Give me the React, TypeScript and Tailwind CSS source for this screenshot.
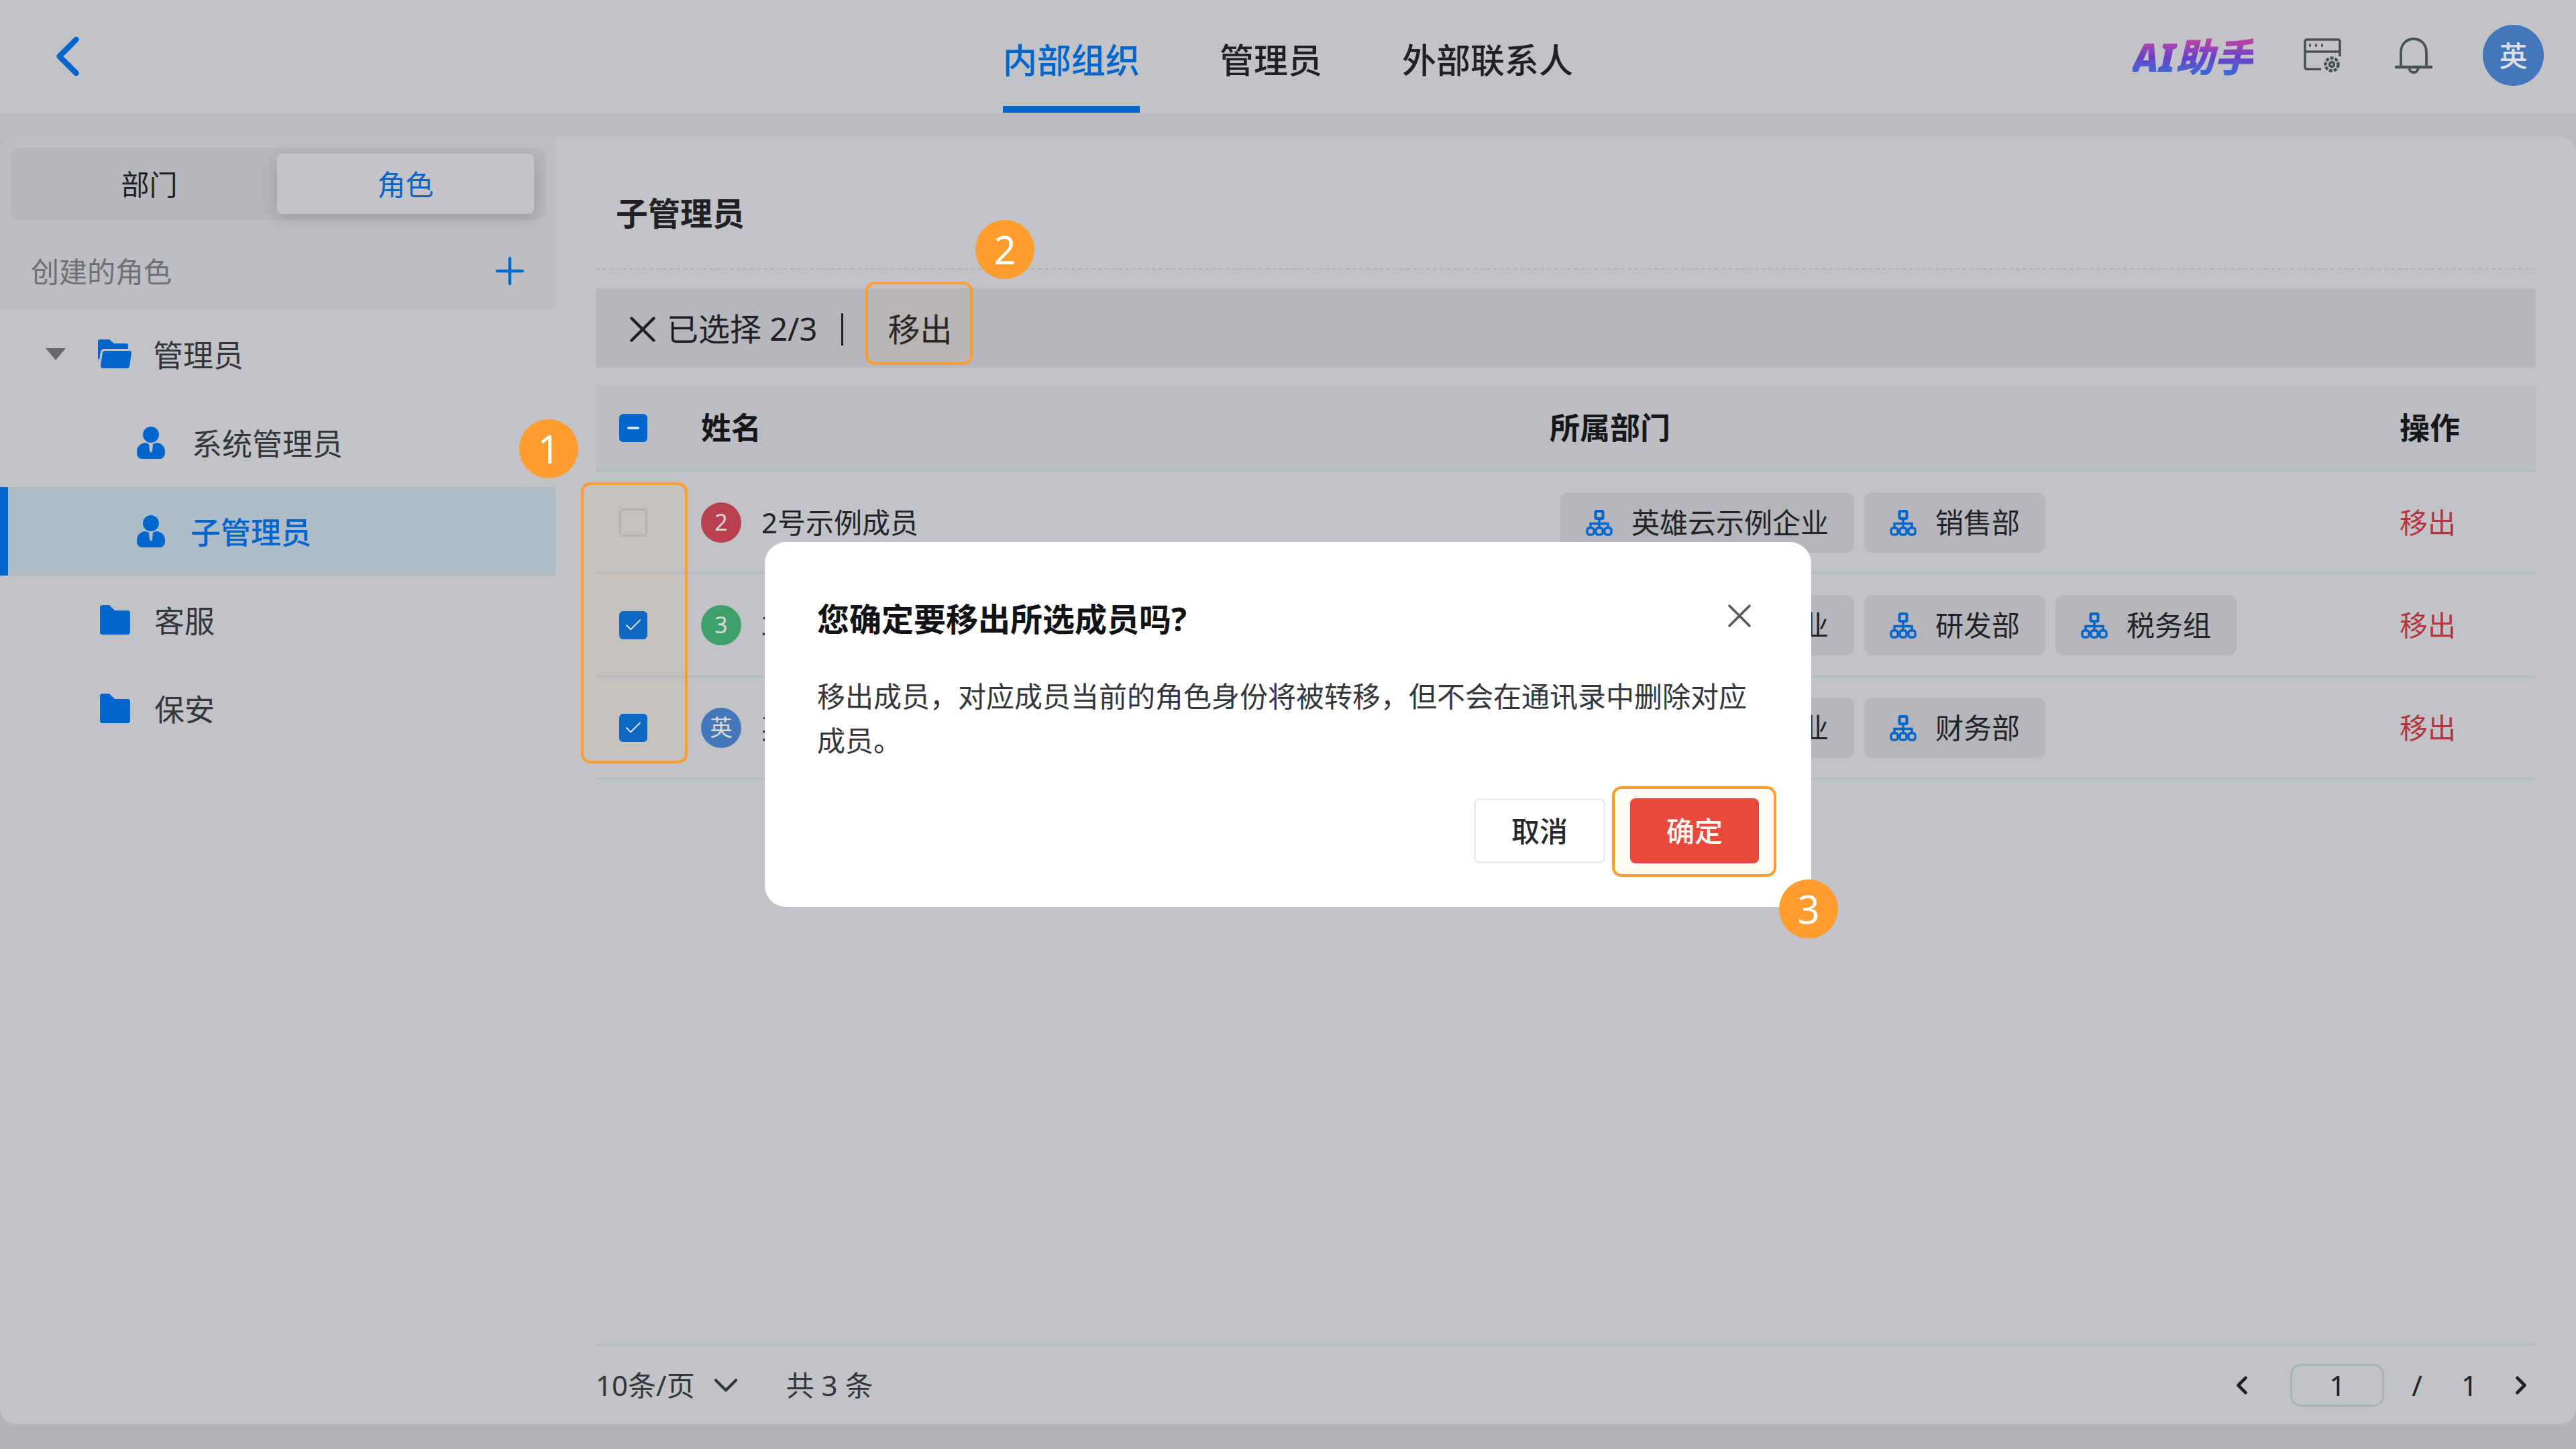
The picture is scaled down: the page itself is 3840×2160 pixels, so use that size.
import React from "react";
import { ChevronLeft, ChevronRight, ChevronDown, Plus, X, Check } from "lucide-react";

const F = { fontFamily: '"Noto Sans","Noto Sans CJK SC",sans-serif' };
const BODY = "移出成员\uFF0C对应成员当前的角色身份将被转移\uFF0C但不会在通讯录中删除对应成员\u3002";

function OrgIcon() {
  return (
    <svg width="40" height="40" viewBox="0 0 40 40" fill="none" stroke="#0066cc" strokeWidth="3.4" className="shrink-0">
      <rect x="14.5" y="3" width="11" height="11" rx="1.5" strokeWidth="4" />
      <path d="M20 14v14M7 28v-6.5h26V28" />
      <rect x="2" y="28" width="10" height="10" rx="3" />
      <rect x="15" y="28" width="10" height="10" rx="3" />
      <rect x="28" y="28" width="10" height="10" rx="3" />
    </svg>
  );
}

function FolderIcon({ open }: { open?: boolean }) {
  return (
    <svg width="50" height="44" viewBox="0 0 50 44" fill="#0066cc" className="shrink-0">
      {open ? (
        <>
          <path d="M0 3a3 3 0 0 1 3-3h14l7 6h18a3 3 0 0 1 3 3v5H10a6 6 0 0 0-6 5L2 31 0 28z" />
          <path d="M7 20a4 4 0 0 1 4-3h36a3 3 0 0 1 3 3l-3 20a4 4 0 0 1-4 3H7a4 4 0 0 1-3-5z" />
        </>
      ) : (
        <path d="M1 4a4 4 0 0 1 4-4h10l8 8h19a4 4 0 0 1 4 4v28a4 4 0 0 1-4 4H5a4 4 0 0 1-4-4z" />
      )}
    </svg>
  );
}

function UserIcon() {
  return (
    <svg width="42" height="48" viewBox="0 0 42 48" fill="#0066cc" className="shrink-0">
      <circle cx="21" cy="12" r="12" />
      <path d="M8 48a8 8 0 0 1-8-8v-3c0-7 5-12 12-13 2 0 4 1 6 2l1 10 2 3 2-3 1-10c2-1 4-2 6-2 7 1 12 6 12 13v3a8 8 0 0 1-8 8z" />
    </svg>
  );
}

function NumBadge({ n, className }: { n: string; className: string }) {
  return (
    <div className={`absolute flex h-[88px] w-[88px] items-center justify-center rounded-full bg-[#ff9d2e] text-[58px] leading-none text-white ${className}`}>
      {n}
    </div>
  );
}

function Box({ state }: { state: "off" | "on" | "mixed" }) {
  if (state === "off") return <div className="h-[42px] w-[42px] rounded-[6px] border-[3px] border-[#b4b4b4]" />;
  return (
    <div className="flex h-[42px] w-[42px] items-center justify-center rounded-[6px] bg-[#0066cc]">
      {state === "on" ? <Check size={30} color="#d8e4f2" strokeWidth={1.6} /> : <div className="h-[4px] w-[18px] rounded-full bg-[#d8e4f2]" />}
    </div>
  );
}

function Tag({ label }: { label: string }) {
  return (
    <div className="flex h-[90px] items-center gap-[28px] rounded-[12px] bg-[#b5b6bb] px-[38px] text-[42px] text-[#222428]">
      <OrgIcon />
      <span>{label}</span>
    </div>
  );
}

function Row({ color, mark, name, tags, state, h }: { color: string; mark: string; name: string; tags: string[]; state: "on" | "off"; h: string }) {
  return (
    <div className={`flex items-center border-b-[3px] border-[#b7bcc4] ${h}`}>
      <div className="flex w-[157px] shrink-0 justify-center pr-[46px]">
        <Box state={state} />
      </div>
      <div className={`flex h-[60px] w-[60px] shrink-0 items-center justify-center rounded-full text-[34px] text-[#d8d8d8] ${color}`}>{mark}</div>
      <div className="ml-[30px] w-[1191px] shrink-0 text-[42px] text-[#222428]">{name}</div>
      <div className="flex w-[1251px] shrink-0 gap-[15px]">
        {tags.map((t) => (
          <Tag key={t} label={t} />
        ))}
      </div>
      <div className="text-[42px] text-[#b63340]">移出</div>
    </div>
  );
}

function TreeRow({ icon, label, indent, active, arrow }: { icon: React.ReactNode; label: string; indent: string; active?: boolean; arrow?: boolean }) {
  return (
    <div className={`relative flex h-[132px] items-center ${indent} ${active ? "border-l-[12px] border-[#0066cc] bg-[#aebbc8]" : ""}`}>
      {arrow && <div className="absolute left-[68px] h-0 w-0 border-x-[15px] border-t-[18px] border-x-transparent border-t-[#67696d]" />}
      {icon}
      <span className={`mt-[4px] text-[45px] ${active ? "ml-[38px] font-medium text-[#0066cc]" : "text-[#33363a]"}`}>{label}</span>
    </div>
  );
}

export default function App() {
  return (
    <div style={F} className="relative flex h-[2160px] w-[3840px] flex-col overflow-hidden bg-gradient-to-b from-[#babbbf] to-[#b2b4b8]">
      <header className="relative flex h-[168px] shrink-0 items-end justify-center gap-[119px] bg-[#c2c3c7] text-[51px] font-medium text-[#1f2125]">
        <ChevronLeft className="absolute left-[51px] top-[34px]" size={100} color="#0066cc" strokeWidth={2} />
        <div className="flex h-[168px] flex-col items-center justify-end border-b-[10px] border-[#0066cc] pb-[31px] text-[#0066cc]">内部组织</div>
        <div className="flex h-[168px] items-end pb-[41px]">管理员</div>
        <div className="flex h-[168px] items-end pb-[41px]">外部联系人</div>
        <div className="absolute right-[48px] top-[37px] flex items-center">
          <span className="mr-[75px] mt-[4px] bg-gradient-to-b from-[#cc3aa0] via-[#6a3fc8] to-[#1f6fd8] bg-clip-text text-[58px] font-black italic leading-none text-transparent">AI助手</span>
          <svg width="56" height="52" viewBox="0 0 56 52" fill="none" stroke="#4c4f54" strokeWidth="3.6" className="mr-[80px]">
            <path d="M26 46H5a3 3 0 0 1-3-3V5a3 3 0 0 1 3-3h46a3 3 0 0 1 3 3v22" />
            <path d="M2 20h52" />
            <path d="M8 10.5h3M17 10.5h3M26 10.5h3" strokeWidth="4" />
            <circle cx="42" cy="39" r="9.5" strokeDasharray="5 2" strokeWidth="4.5" />
            <circle cx="42" cy="39" r="3.4" />
          </svg>
          <svg width="56" height="56" viewBox="0 0 56 56" fill="none" stroke="#4c4f54" strokeWidth="3.8" strokeLinecap="round" className="mr-[75px]">
            <path d="M9 45V23C9 11 17 3 28 3s19 8 19 20v22" />
            <path d="M2 45h52" strokeWidth="4.4" />
            <path d="M21 46c1 5 4 7 7 7s6-2 7-7" />
          </svg>
          <div className="flex h-[91px] w-[91px] items-center justify-center rounded-full bg-[#4477b9] text-[42px] text-[#dbe0e8]">英</div>
        </div>
      </header>

      <main className="mt-[35px] flex h-[1920px] shrink-0 overflow-hidden rounded-[24px] bg-[#c2c3c7]">
        <aside className="w-[828px] shrink-0">
          <div className="bg-[#bcbec3] pt-[17px]">
            <div className="mx-[16px] flex h-[108px] w-[798px] items-center rounded-[14px] bg-[#b5b7bc] pr-[18px] text-[42px]">
              <div className="flex h-[90px] flex-1 items-center justify-center pl-[16px] text-[#1f2125]">部门</div>
              <div className="flex h-[90px] w-[383px] items-center justify-center rounded-[8px] bg-[#c3c4c8] text-[#0066cc] shadow-[0_8px_24px_rgba(0,0,0,0.14)]">角色</div>
            </div>
            <div className="flex h-[132px] items-center justify-between pl-[46px] pr-[36px] pt-[20px] text-[42px] text-[#6e7075]">
              <span>创建的角色</span>
              <Plus size={64} color="#0066cc" strokeWidth={1.7} />
            </div>
          </div>
          <div className="pt-[2px]">
            <TreeRow arrow indent="pl-[146px] gap-[32px]" icon={<FolderIcon open />} label="管理员" />
            <TreeRow indent="pl-[204px] gap-[40px]" icon={<UserIcon />} label="系统管理员" />
            <TreeRow active indent="pl-[192px]" icon={<UserIcon />} label="子管理员" />
            <TreeRow indent="pl-[148px] gap-[32px]" icon={<FolderIcon />} label="客服" />
            <TreeRow indent="pl-[148px] gap-[32px]" icon={<FolderIcon />} label="保安" />
          </div>
        </aside>

        <section className="ml-[60px] flex w-[2892px] shrink-0 flex-col">
          <div className="flex h-[199px] shrink-0 items-center border-b-[2px] border-dashed border-[#b0b2b7] pl-[30px] pt-[33px] text-[48px] font-bold text-[#1f2125]">子管理员</div>
          <div className="mt-[28px] flex h-[118px] shrink-0 items-center bg-[#b5b7bc] pl-[37px] pt-[3px] text-[47px] text-[#1f2125]">
            <X size={66} strokeWidth={1.6} />
            <span className="ml-[3px]">已选择 2/3</span>
            <div className="ml-[36px] h-[48px] w-[3px] bg-[#1f2125]" />
            <span className="ml-[66px] text-[48px]">移出</span>
          </div>
          <div className="mt-[26px] flex h-[130px] shrink-0 items-center border-b-[3px] border-[#b4b9c1] bg-[#bcbdc2] text-[45px] font-bold text-[#15171a]">
            <div className="flex w-[157px] shrink-0 justify-center pr-[46px]">
              <Box state="mixed" />
            </div>
            <div className="w-[1265px] shrink-0">姓名</div>
            <div className="w-[1267px] shrink-0">所属部门</div>
            <div>操作</div>
          </div>
          <Row h="h-[152px]" color="bg-[#b84050]" mark="2" name="2号示例成员" state="off" tags={["英雄云示例企业", "销售部"]} />
          <Row h="h-[154px]" color="bg-[#3fa06c]" mark="3" name="3号示例成员" state="on" tags={["英雄云示例企业", "研发部", "税务组"]} />
          <Row h="h-[152px]" color="bg-[#4477b9]" mark="英" name="英雄云管理员" state="on" tags={["英雄云示例企业", "财务部"]} />
          <div className="mt-auto flex h-[120px] shrink-0 items-center border-t-[3px] border-[#b7bcc4] text-[42px] text-[#33363a]">
            <span>10条/页</span>
            <ChevronDown className="ml-[16px]" size={60} color="#33363a" strokeWidth={1.7} />
            <span className="ml-[60px]">共 3 条</span>
            <div className="ml-auto flex items-center text-[#1f2125]">
              <ChevronLeft size={44} color="#1f2125" strokeWidth={2.6} />
              <div className="ml-[50px] flex h-[64px] w-[140px] items-center justify-center rounded-[16px] border-[3px] border-[#abb0b8]">1</div>
              <span className="ml-[41px]">/</span>
              <span className="ml-[58px]">1</span>
              <ChevronRight className="ml-[43px]" size={44} color="#1f2125" strokeWidth={2.6} />
            </div>
          </div>
        </section>
      </main>

      <div className="absolute left-[866px] top-[719px] h-[419px] w-[159px] rounded-[14px] border-[4px] border-[#ff9d2e] bg-[#ff9d2e]/5" />
      <div className="absolute left-[1290px] top-[420px] h-[124px] w-[160px] rounded-[14px] border-[4px] border-[#ff9d2e] bg-[#ff9d2e]/5" />
      <NumBadge n="1" className="left-[774px] top-[625px]" />
      <NumBadge n="2" className="left-[1454px] top-[328px]" />

      <div className="absolute left-[1140px] top-[808px] flex h-[544px] w-[1560px] flex-col rounded-[32px] bg-white px-[78px]">
        <div className="mt-[91px] text-[48px] font-bold leading-none text-[#111317]">您确定要移出所选成员吗?</div>
        <X className="absolute left-[1423px] top-[80px]" size={60} color="#55585c" strokeWidth={1.4} />
        <p className="mt-[58px] w-[1404px] text-[42px] leading-[66px] text-[#33363a]">{BODY}</p>
        <div className="mb-[65px] mt-auto flex justify-end gap-[37px]">
          <div className="flex h-[97px] w-[196px] items-center justify-center rounded-[8px] border-[3px] border-[#ececec] text-[42px] font-medium text-[#26282c]">取消</div>
          <div className="flex h-[97px] w-[192px] items-center justify-center rounded-[8px] bg-[#e8453e] text-[42px] font-medium text-white">确定</div>
        </div>
      </div>
      <div className="absolute left-[2403px] top-[1172px] h-[135px] w-[245px] rounded-[14px] border-[4px] border-[#ff9d2e] bg-[#ff9d2e]/5" />
      <NumBadge n="3" className="left-[2652px] top-[1311px]" />
    </div>
  );
}
